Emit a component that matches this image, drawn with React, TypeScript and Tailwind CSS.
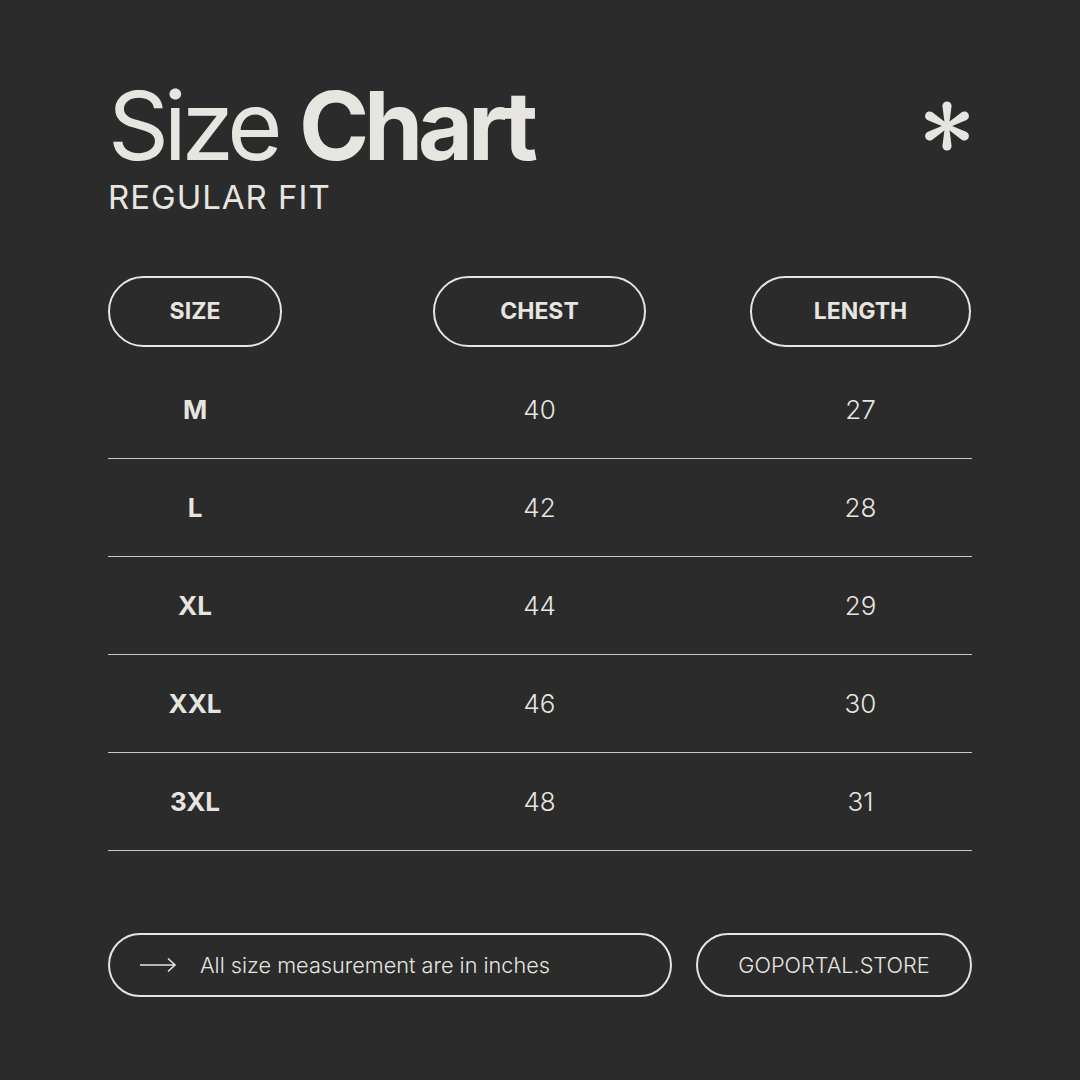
import React from "react";

const rows = [
  { size: "M", chest: "40", length: "27" },
  { size: "L", chest: "42", length: "28" },
  { size: "XL", chest: "44", length: "29" },
  { size: "XXL", chest: "46", length: "30" },
  { size: "3XL", chest: "48", length: "31" },
];

const grid = "grid grid-cols-[174px_151px_213px_104px_221px]";

function Asterisk() {
  return (
    <svg width="54" height="54" viewBox="-27 -27 54 54">
      {[0, 60, 120, 180, 240, 300].map((a) => (
        <path
          key={a}
          d="M -2 0 L -4.6 -20 A 4.6 4.6 0 0 1 4.6 -20 L 2 0 Z"
          fill="#e6e5e0"
          transform={`rotate(${a})`}
        />
      ))}
    </svg>
  );
}

export default function App() {
  return (
    <div
      className="w-[1080px] h-[1080px] bg-[#2b2b2b] text-[#e6e5e0] px-[108px] pt-[78px]"
      style={{ fontFamily: "Inter, 'Noto Sans', sans-serif" }}
    >
      {/* header */}
      <div className="flex justify-between items-start">
        <div>
          <h1 className="text-[95px] leading-none tracking-[-0.055em] font-normal">
            Size <span className="font-bold">Chart</span>
          </h1>
          <p className="text-[33px] leading-none mt-[8px] tracking-[0.03em]">REGULAR FIT</p>
        </div>
        <div className="mt-[21px] mr-[-2px]">
          <Asterisk />
        </div>
      </div>

      {/* column headers */}
      <div className={`${grid} mt-[62px] h-[71px]`}>
        <div className="col-start-1 rounded-full border-2 border-[#e6e5e0] flex items-center justify-center text-[23px] font-bold">
          SIZE
        </div>
        <div className="col-start-3 rounded-full border-2 border-[#e6e5e0] flex items-center justify-center text-[23px] font-bold">
          CHEST
        </div>
        <div className="col-start-5 rounded-full border-2 border-[#e6e5e0] flex items-center justify-center text-[23px] font-bold">
          LENGTH
        </div>
      </div>

      {/* rows */}
      <div className="mt-[14px]">
        {rows.map((r) => (
          <div key={r.size} className={`${grid} h-[98px] items-center border-b border-[#c9c8c2] text-[26px]`}>
            <div className="col-start-1 text-center font-bold">{r.size}</div>
            <div className="col-start-3 text-center font-light">{r.chest}</div>
            <div className="col-start-5 text-center font-light">{r.length}</div>
          </div>
        ))}
      </div>

      {/* footer */}
      <div className="flex gap-[24px] mt-[82px] h-[64px]">
        <div className="w-[564px] rounded-full border-2 border-[#e6e5e0] flex items-center pl-[29px] text-[21.7px] font-light">
          <svg width="38" height="16" viewBox="0 0 38 16" className="mr-[23px]">
            <path d="M1 8 H36 M29 1.5 L36 8 L29 14.5" stroke="#e6e5e0" strokeWidth="1.6" fill="none" />
          </svg>
          All size measurement are in inches
        </div>
        <div className="flex-1 rounded-full border-2 border-[#e6e5e0] flex items-center justify-center text-[21.7px] font-light">
          GOPORTAL.STORE
        </div>
      </div>
    </div>
  );
}
